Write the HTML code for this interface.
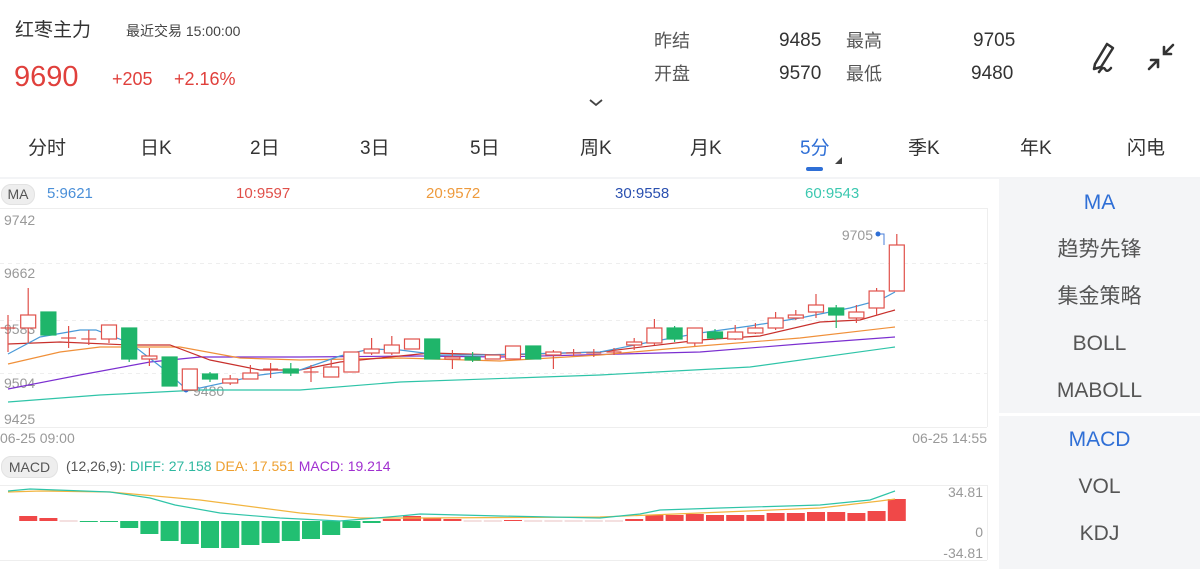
<!DOCTYPE html>
<html><head><meta charset="utf-8"><style>
*{margin:0;padding:0;box-sizing:border-box}
body{width:1200px;height:569px;overflow:hidden;background:#fff;font-family:"Liberation Sans","Noto Sans CJK SC",sans-serif;position:relative;color:#333}
.a{position:absolute;white-space:nowrap}
.s{position:absolute;white-space:nowrap;line-height:22px;height:22px}
.tab{position:absolute;top:137px;font-size:19px;color:#333;line-height:24px}
.rp{position:absolute;left:999px;width:201px;background:#f4f5f7}
.rp div{height:47px;line-height:47px;text-align:center;font-size:21px;color:#555}
</style></head><body>
<div class="s" style="left:15px;top:20px;font-size:19px;color:#333">红枣主力</div>
<div class="s" style="left:126px;top:20px;font-size:14px;color:#444">最近交易 15:00:00</div>
<div class="a" style="left:14px;top:61px;font-size:29px;color:#e0403c">9690</div>
<div class="a" style="left:112px;top:69px;font-size:18px;color:#e0403c">+205</div>
<div class="a" style="left:174px;top:69px;font-size:18px;color:#e0403c">+2.16%</div>
<div class="s" style="left:654px;top:30px;font-size:18px;color:#555">昨结</div>
<div class="s" style="left:779px;top:30px;font-size:19px;color:#333">9485</div>
<div class="s" style="left:846px;top:30px;font-size:18px;color:#555">最高</div>
<div class="s" style="left:973px;top:30px;font-size:19px;color:#333">9705</div>
<div class="s" style="left:654px;top:63px;font-size:18px;color:#555">开盘</div>
<div class="s" style="left:779px;top:63px;font-size:19px;color:#333">9570</div>
<div class="s" style="left:846px;top:63px;font-size:18px;color:#555">最低</div>
<div class="s" style="left:971px;top:63px;font-size:19px;color:#333">9480</div>
<svg class="a" style="left:1085px;top:38px" width="100" height="40" viewBox="0 0 100 40">
<path d="M10 26 L22 6 L28 10 L16 29 L9 31 Z" fill="none" stroke="#333" stroke-width="2.5" stroke-linejoin="round"/>
<path d="M14 34 Q18 28 20 31 Q22 35 26 30" fill="none" stroke="#333" stroke-width="2.5" stroke-linecap="round"/>
<path d="M88 7 L80 15 M79 9 L79 16 L86 16" fill="none" stroke="#333" stroke-width="2.6" stroke-linecap="round"/>
<path d="M64 31 L72 23 M73 29 L73 22 L66 22" fill="none" stroke="#333" stroke-width="2.6" stroke-linecap="round"/>
</svg>
<svg class="a" style="left:588px;top:98px" width="16" height="10"><path d="M2 2 L8 7 L14 2" fill="none" stroke="#444" stroke-width="1.8"/></svg>
<div class="tab" style="left:28px">分时</div>
<div class="tab" style="left:140px">日K</div>
<div class="tab" style="left:250px">2日</div>
<div class="tab" style="left:360px">3日</div>
<div class="tab" style="left:470px">5日</div>
<div class="tab" style="left:580px">周K</div>
<div class="tab" style="left:690px">月K</div>
<div class="tab" style="left:800px;color:#2f6fd6">5分</div>
<div class="a" style="left:806px;top:167px;width:17px;height:4px;border-radius:2px;background:#2f6fd6"></div>
<svg class="a" style="left:834px;top:156px" width="9" height="9"><path d="M8 1 L8 8 L1 8 Z" fill="#444"/></svg>
<div class="tab" style="left:908px">季K</div>
<div class="tab" style="left:1020px">年K</div>
<div class="tab" style="left:1127px">闪电</div>
<div class="a" style="left:0;top:177px;width:1200px;height:2px;background:#f3f4f6"></div>

<div class="rp" style="top:179px;height:234px"><div style="color:#2f6fd6">MA</div><div>趋势先锋</div><div>集金策略</div><div>BOLL</div><div>MABOLL</div></div>
<div class="rp" style="top:416px;height:153px"><div style="color:#2f6fd6">MACD</div><div>VOL</div><div>KDJ</div></div>

<div class="a" style="left:1px;top:184px;width:34px;height:21px;border-radius:10px;background:#eeeeee;border:1px solid #e2e2e2;font-size:14px;line-height:19px;text-align:center;color:#555">MA</div>
<div class="a" style="left:47px;top:185px;font-size:15px;color:#4a8fd8">5:9621</div>
<div class="a" style="left:236px;top:185px;font-size:15px;color:#e0504a">10:9597</div>
<div class="a" style="left:426px;top:185px;font-size:15px;color:#ee9a3c">20:9572</div>
<div class="a" style="left:615px;top:185px;font-size:15px;color:#2a50b0">30:9558</div>
<div class="a" style="left:805px;top:185px;font-size:15px;color:#3cc8b0">60:9543</div>

<svg class="a" style="left:0;top:0" width="1000" height="569">
<g stroke="#eeeeee" stroke-width="1" fill="none">
<line x1="0" y1="208.5" x2="987" y2="208.5"/><line x1="0" y1="427.5" x2="987" y2="427.5"/><line x1="987.5" y1="208" x2="987.5" y2="427"/>
<line x1="0" y1="485.5" x2="987" y2="485.5"/><line x1="0" y1="560.5" x2="987" y2="560.5"/><line x1="987.5" y1="485" x2="987.5" y2="560"/>
<g stroke-dasharray="4,4"><line x1="0" y1="263.5" x2="987" y2="263.5"/><line x1="0" y1="320.5" x2="987" y2="320.5"/><line x1="0" y1="373.5" x2="987" y2="373.5"/></g>
</g>
<g font-size="14" fill="#999" font-family="Liberation Sans,sans-serif">
<text x="4" y="225">9742</text><text x="4" y="278">9662</text><text x="4" y="334">9583</text><text x="4" y="388">9504</text><text x="4" y="424">9425</text>
<text x="0" y="443">06-25 09:00</text><text x="987" y="443" text-anchor="end">06-25 14:55</text>
<text x="193" y="396">9480</text><text x="873" y="240" text-anchor="end">9705</text>
<text x="983" y="497" text-anchor="end">34.81</text><text x="983" y="537" text-anchor="end">0</text><text x="983" y="558" text-anchor="end">-34.81</text>
</g>
<g fill="none" stroke-width="1.2">
<polyline stroke="#2fc4a8" points="8,402 100,395 200,390 300,390 400,382 600,375 750,367 895,347"/>
<polyline stroke="#7b2fd0" points="8,389 80,375 150,362 200,357 300,357 420,356 500,357 700,352 800,344 895,337"/>
<polyline stroke="#f0903a" points="8,364 60,352 100,347 180,347 240,358 300,360 400,358 500,361 600,355 700,346 800,338 895,327"/>
<polyline stroke="#c8302c" points="8,344 60,342 130,345 170,345 210,360 260,370 300,370 340,362 380,358 430,353 500,355 600,352 700,340 760,336 820,322 860,320 895,310"/>
<polyline stroke="#4a9ad8" points="8,354 40,337 80,330 96,330 130,343 165,370 185,388 200,388 260,375 300,370 340,356 370,349 400,350 440,355 480,355 600,352 650,342 700,333 750,326 800,318 850,308 880,300 895,292"/>
</g>
<path d="M186 390 L193 390 M878 234 L884 234 L884 245" stroke="#4a7fd8" stroke-width="1" fill="none"/>
<circle cx="186" cy="390" r="2.5" fill="#2f6fd6"/><circle cx="878" cy="234" r="2.5" fill="#2f6fd6"/>
<g id="c" stroke-width="1.2"></g>
<g id="m"></g>
<g fill="none" stroke-width="1.2">
<polyline stroke="#f2b540" points="8,492 40,491 110,492 200,500 300,513 360,518 420,518 600,517 700,513 820,508 880,501 895,499"/>
<polyline stroke="#2fc4a8" points="8,491 30,489 110,492 150,498 175,505 220,513 280,518 340,521 400,516 420,514 500,516 600,518 640,514 660,510 720,508 820,505 870,500 895,491"/>
</g>
</svg>
<div class="a" style="left:1px;top:456px;width:57px;height:22px;border-radius:10px;background:#eeeeee;border:1px solid #e2e2e2;font-size:14px;line-height:20px;text-align:center;color:#555">MACD</div>
<div class="a" style="left:66px;top:458px;font-size:14px;color:#555">(12,26,9): <span style="color:#2fb8a0">DIFF: 27.158</span> <span style="color:#eea030">DEA: 17.551</span> <span style="color:#a030d0">MACD: 19.214</span></div>
<script>
var C=[["c",328,328,315,352],["r",315,328,288,343],["g",312,335,312,335],["c",338,338,326,348],["c",339,339,330,345],["r",325,339,325,343],["g",328,359,328,362],["r",356,359,348,366],["g",357,386,357,386],["r",369,390,369,390],["g",374,379,372,382],["r",379,383,375,385],["r",373,379,365,379],["c",369,369,363,378],["g",369,373,363,376],["c",372,372,365,382],["r",367,377,360,377],["r",352,372,352,372],["r",349,353,338,355],["r",345,353,336,355],["r",339,349,339,349],["g",339,359,339,359],["r",357,359,350,369],["g",357,360,352,362],["r",355,359,355,359],["r",346,359,346,359],["g",346,359,346,359],["r",352,355,350,369],["c",353,353,349,356],["c",353,353,349,357],["c",352,352,348,355],["r",342,345,338,350],["r",328,343,319,345],["g",328,339,326,342],["r",328,343,328,346],["g",332,338,329,340],["r",332,339,325,340],["r",328,333,323,334],["r",318,328,312,330],["r",315,318,310,320],["r",305,312,294,318],["g",308,315,305,328],["r",312,318,305,323],["r",291,308,288,315],["r",245,291,234,291]];
var s="";
C.forEach(function(c,i){var x=8+20.2*i,w=15;var col=c[0]=="g"?"#1fb56a":"#e0504a";
s+='<line x1="'+x+'" y1="'+c[3]+'" x2="'+x+'" y2="'+c[4]+'" stroke="'+col+'"/>';
if(c[0]=="c")s+='<line x1="'+(x-w/2)+'" y1="'+c[1]+'" x2="'+(x+w/2)+'" y2="'+c[1]+'" stroke="'+col+'"/>';
else if(c[0]=="g")s+='<rect x="'+(x-w/2)+'" y="'+c[1]+'" width="'+w+'" height="'+Math.max(2,c[2]-c[1])+'" fill="'+col+'" stroke="'+col+'"/>';
else s+='<rect x="'+(x-w/2)+'" y="'+c[1]+'" width="'+w+'" height="'+Math.max(2,c[2]-c[1])+'" fill="#fff" stroke="'+col+'"/>';});
document.getElementById("c").innerHTML=s;
var M=[0,5,3,0,-1,-1,-7,-13,-20,-23,-27,-27,-24,-22,-20,-18,-14,-7,-2,2,5,3,2,0,0,1,0,0,0,0,0,2,6,6,7,6,6,6,8,8,9,9,8,10,22];
var t="";M.forEach(function(v,i){if(i==0)return;var x=8+20.2*i-9,w=18;
if(v==0){t+='<rect x="'+x+'" y="520.5" width="'+w+'" height="1" fill="#e8c0c0"/>';return;}
var col=v>0?"#f04848":"#22bf72";var y=v>0?521-v:521;t+='<rect x="'+x+'" y="'+y+'" width="'+w+'" height="'+Math.abs(v)+'" fill="'+col+'"/>';});
document.getElementById("m").innerHTML=t;
</script>
</body></html>
